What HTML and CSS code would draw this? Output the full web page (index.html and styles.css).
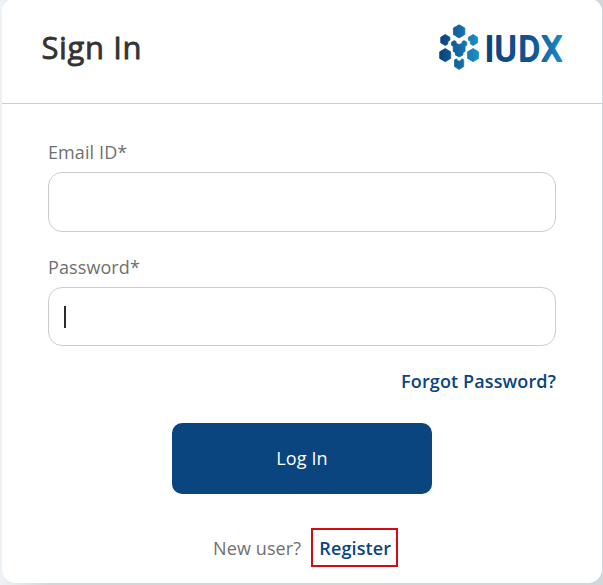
FILE: index.html
```
<!DOCTYPE html>
<html lang="en">
<head>
<meta charset="utf-8">
<title>Sign In</title>
<link rel="stylesheet" href="styles.css">
</head>
<body>
<main class="card">
  <header class="card-header">
    <h1>Sign In</h1>
    <svg class="logo" viewBox="0 0 126 50" role="img" aria-label="IUDX">
      <defs>
        <linearGradient id="mark" gradientUnits="userSpaceOnUse" x1="2" y1="0" x2="42" y2="0">
          <stop offset="0" stop-color="#0b437f"/><stop offset="1" stop-color="#1c91c9"/>
        </linearGradient>
        <linearGradient id="word" gradientUnits="userSpaceOnUse" x1="51" y1="0" x2="134" y2="0">
          <stop offset="0" stop-color="#0b437f"/><stop offset=".6" stop-color="#0f5798"/><stop offset="1" stop-color="#1c91c9"/>
        </linearGradient>
      </defs>
      <g class="mark" transform="translate(1.2 .4) scale(.95 1)">
        <path d="M21 4.3 27 7.6V14.1L21 17.6 15 14.1V7.6Z"/>
        <path d="M6.3 14 11.3 16.9V19.7L9 21.3V23.7L6.3 25.1 1.6 22.4V16.9Z"/>
        <path d="M35.7 14 40.4 16.9V22.4L35.7 25.1 33 23.7V21.3L30.7 19.7V16.9Z"/>
        <path d="M6.3 28.1 12.1 31.4V38L6.3 41.3.5 38V31.4Z"/>
        <path d="M35.7 28.1 41.5 31.4V38L35.7 41.3 29.9 38V31.4Z"/>
        <path d="M15.8 20.2 17.8 21.2V22.8L21 24.2 24.2 22.8V21.2L26.2 20.2 29 21.8V24.8L27.2 25.8V31L25 32.3V34.6L21 36.5 17 34.6V32.3L14.8 31V25.8L13 24.8V21.8Z"/>
        <path d="M16.2 39.4 18.2 38.4 19.2 40 21 40.8 22.8 40 23.8 38.4 25.8 39.4V46.2L21 49 16.2 46.2Z"/>
      </g>
      <text class="word" transform="translate(0 40.5) scale(.95 1)" x="49.6 60 84.8 109">IUDX</text>
    </svg>
  </header>
  <form class="form">
    <label for="email">Email ID*</label>
    <input class="field email" id="email" type="text">
    <label for="password">Password*</label>
    <div class="field password" id="password"><span class="caret"></span></div>
    <a class="link forgot">Forgot Password?</a>
    <button class="submit" type="button">Log In</button>
    <div class="signup"><span>New user?</span><a class="link register">Register</a></div>
  </form>
</main>
</body>
</html>
```
FILE: styles.css
```
* { box-sizing: border-box; }
html { height: 100%; overflow: hidden; }
body {
  margin: 0;
  height: 585px;
  padding: 0 1px 2px 2px;
  background: linear-gradient(90deg, #edf2f6 0, #d1d7db 50px, #d1d7db 100%);
  font-family: "Open Sans", "Noto Sans", sans-serif;
  color: #707070;
  overflow: hidden;
}
.card {
  height: 585px;
  margin-top: -2px;
  background: #fff;
  border-radius: 14px;
}
.card-header {
  display: flex;
  justify-content: space-between;
  height: 106px;
  padding: 22px 38px 0 39.5px;
  border-bottom: 1px solid #ccc;
}
h1 {
  margin: 4px 0 0;
  font-size: 31px;
  line-height: 46px;
  font-weight: 400;
  letter-spacing: .6px;
  -webkit-text-stroke: .8px #333;
  color: #333;
}
.logo { width: 126px; height: 50px; overflow: visible; }
.mark { fill: url(#mark); stroke: url(#mark); stroke-width: .8; stroke-linejoin: round; }
.word {
  font: 400 34.5px Roboto, sans-serif;
  fill: url(#word);
  stroke: url(#word);
  stroke-width: 2.1;
  stroke-linejoin: round;
}
.form {
  display: flex;
  flex-direction: column;
  padding: 36px 46px 0;
}
label { height: 32px; line-height: 25px; font-size: 18px; letter-spacing: .1px; }
.field {
  width: 508px;
  border: 1px solid #ccc;
  border-radius: 14px;
  background: #fff;
}
.email { height: 60px; margin: 0 0 23px; }
.password { height: 59px; padding: 18px 15px; }
.caret { display: block; width: 2px; height: 22px; background: #2c2c2c; }
.link { color: #0a457f; font-size: 18px; font-weight: 600; line-height: 25px; letter-spacing: .12px; }
.forgot { align-self: flex-end; margin-top: 23px; }
.submit {
  align-self: center;
  width: 260px;
  height: 71px;
  margin-top: 29px;
  padding: 0 0 2px;
  border: 0;
  border-radius: 10px;
  background: #0a457f;
  color: #fff;
  font: 18px "Open Sans", sans-serif;
  letter-spacing: .1px;
}
.signup {
  display: flex;
  align-items: center;
  margin: 34px 0 0 165px;
  gap: 9.5px;
  font-size: 18px;
  letter-spacing: .12px;
}
.register {
  width: 87px;
  height: 39px;
  padding-left: 2px;
  border: 2px solid #d00d12;
  text-align: center;
  line-height: 36px;
}
```
